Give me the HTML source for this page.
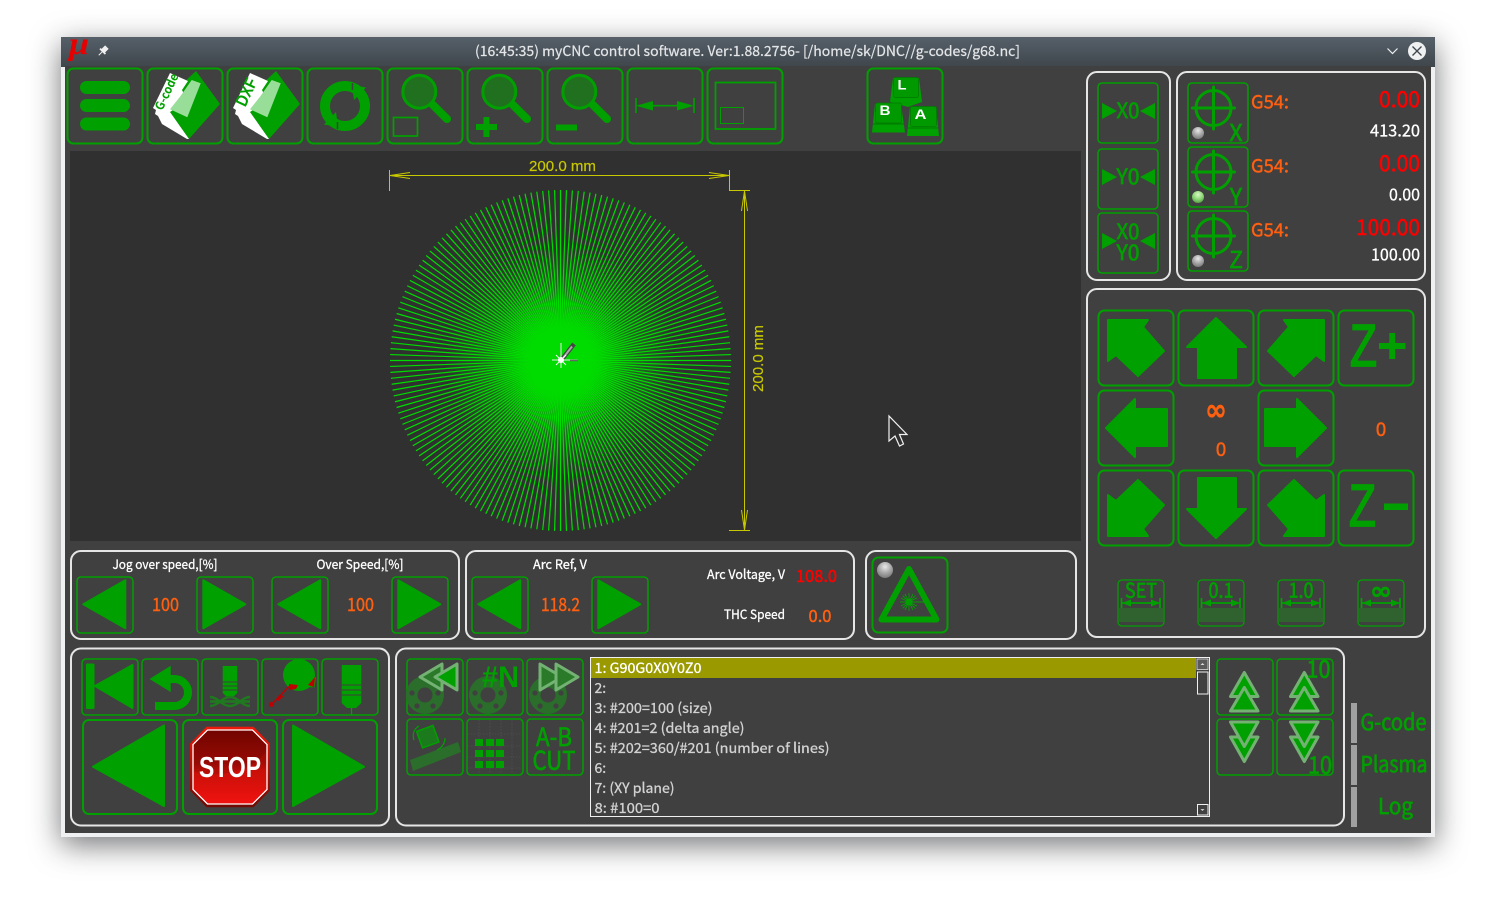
<!DOCTYPE html>
<html><head><meta charset="utf-8"><title>myCNC</title>
<style>
html,body{margin:0;padding:0;background:#fff;width:1496px;height:899px;overflow:hidden}
#win{position:absolute;left:61px;top:37px;width:1374px;height:800px;border-radius:3px 3px 0 0;box-shadow:0 8px 30px rgba(30,33,36,.62);background:#eff0f1}
svg{position:absolute;left:0;top:0}
text{font-family:"Noto Sans CJK SC","Liberation Sans",sans-serif}
.b{fill:none;stroke:#00a000;stroke-width:2}
.s{fill:none;stroke:#00a000;stroke-width:1.5}
.p{fill:none;stroke:#e6e6e6;stroke-width:2}
.g{fill:#00a000}
.gl{fill:#00a000;stroke:#00a000;stroke-width:2;stroke-linejoin:round}
.y{fill:#c8c800;font-family:"Liberation Sans",sans-serif;font-size:14.5px;stroke:#c8c800;stroke-width:.2}
.yl{stroke:#c8c800;stroke-width:1;fill:none}
.w{fill:#fff}
.o{fill:#ff6010}
.r{fill:#f00}
.l{fill:#d2d2d2;font-size:14px;stroke:#d2d2d2;stroke-width:.3}
text.g{stroke:#00a000;stroke-width:.65}
text.o{stroke:#ff6010;stroke-width:.4}
text.r{stroke:#f00;stroke-width:.45}
text.w{stroke:#fff;stroke-width:.3}
.ghost{fill:#2a7a2a;stroke:#74b274;stroke-width:3;stroke-linejoin:round}
.ghostf{fill:#00a000;stroke:#74b274;stroke-width:3;stroke-linejoin:round}
.kf{fill:#009a00;stroke:#007a00;stroke-width:.8}
.ks{fill:#00a000}
.kl{stroke:#006c00;stroke-width:.8;fill:none}
</style></head><body>
<div id="win"></div>
<svg width="1496" height="899" viewBox="0 0 1496 899" xmlns="http://www.w3.org/2000/svg">
<defs>
<linearGradient id="tb" x1="0" y1="0" x2="0" y2="1"><stop offset="0" stop-color="#566069"/><stop offset="1" stop-color="#3f464c"/></linearGradient>
<radialGradient id="led" cx=".5" cy=".3" r=".7"><stop offset="0" stop-color="#e8e8e8"/><stop offset=".55" stop-color="#a8a8a8"/><stop offset="1" stop-color="#7a7a7a"/></radialGradient>
<radialGradient id="ledg" cx=".5" cy=".3" r=".7"><stop offset="0" stop-color="#d8f8c8"/><stop offset=".55" stop-color="#90d878"/><stop offset="1" stop-color="#58a048"/></radialGradient>
<linearGradient id="st" x1="0" y1="0" x2="0" y2="1"><stop offset="0" stop-color="#7f0500"/><stop offset=".45" stop-color="#a80c06"/><stop offset=".55" stop-color="#c81008"/><stop offset="1" stop-color="#f01210"/></linearGradient>
<linearGradient id="so" x1="0" y1="0" x2="0" y2="1"><stop offset="0" stop-color="#f01808"/><stop offset="1" stop-color="#6e0a04"/></linearGradient>
<radialGradient id="glow" cx=".5" cy=".5" r=".5"><stop offset="0" stop-color="#00dc00" stop-opacity=".95"/><stop offset=".3" stop-color="#00dc00" stop-opacity=".85"/><stop offset=".65" stop-color="#00dc00" stop-opacity=".3"/><stop offset="1" stop-color="#00dc00" stop-opacity="0"/></radialGradient>

<line id="d0" x1="-170.5" x2="170.5" y1="0" y2="0" stroke="#00dc00" stroke-width="1.2"/>
<g id="d1"><use href="#d0"/><use href="#d0" transform="rotate(2)"/><use href="#d0" transform="rotate(4)"/><use href="#d0" transform="rotate(6)"/><use href="#d0" transform="rotate(8)"/></g>
<g id="d2"><use href="#d1"/><use href="#d1" transform="rotate(10)"/><use href="#d1" transform="rotate(20)"/></g>
<g id="d3"><use href="#d2"/><use href="#d2" transform="rotate(30)"/><use href="#d2" transform="rotate(60)"/></g>

<g id="tl"><polygon class="gl" points="7,28 49,4 49,52"/></g>
<g id="tr"><polygon class="gl" points="7,4 49,28 7,52"/></g>
<g id="mag"><circle cx="19.3" cy="24.7" r="16.5" fill="#207020" stroke="#00a000" stroke-width="3"/><line x1="33" y1="38" x2="47" y2="52" stroke="#00a000" stroke-width="8" stroke-linecap="round"/></g>
<g id="cross"><circle cx="0" cy="0" r="17.5" fill="none" stroke="#00a000" stroke-width="3"/><path d="M-21,0H21M0,-21V21" stroke="#00a000" stroke-width="3" stroke-linecap="round"/></g>
<g id="meas"><rect x="2" y="29" width="44" height="14" fill="#2f622f"/><path d="M4.5,19V29M43,19V29M5,24H43" stroke="#00a000" stroke-width="1.7" fill="none"/><polygon class="g" points="5,24 14,20.5 14,27.5"/><polygon class="g" points="43,24 34,20.5 34,27.5"/><rect class="s" style="stroke-width:1.2" x="1" y="1" width="46" height="46" rx="4"/></g>
<g id="gear"><circle r="19" fill="#2b6d2b"/><circle r="7.5" fill="#404040"/><circle cx="-13" cy="-2" r="2.6" fill="#404040"/><circle cx="13" cy="-2" r="2.6" fill="#404040"/><circle cx="-8" cy="11" r="2.6" fill="#404040"/><circle cx="8" cy="11" r="2.6" fill="#404040"/></g>
<polygon id="nw" class="gl" points="10,10 50,10 45,17 66,41 40,66 18,45 10,51"/>
<polygon id="nn" class="gl" points="38,8 68,37 58,37 58,68 20,68 20,37 9,37"/>
<polygon id="ww" class="gl" points="8,38 37,9 37,19 69,19 69,56 37,56 37,67"/>
</defs>

<!-- window chrome -->
<rect x="61" y="37" width="1374" height="30" fill="url(#tb)"/>
<rect x="65" y="66" width="1366" height="767" fill="#404040"/>
<text x="69" y="54" style="font-family:'Liberation Serif',serif;font-style:italic;font-weight:bold;font-size:32px" fill="#e60000" textLength="20" lengthAdjust="spacingAndGlyphs">μ</text>
<g transform="translate(103,51) rotate(45)" fill="#f0f0f0"><rect x="-2.5" y="-5.5" width="5" height="6"/><rect x="-3.8" y="-.5" width="7.6" height="1.8"/><rect x="-.5" y="1" width="1" height="5"/></g>
<text x="747.5" y="56" text-anchor="middle" font-size="14" fill="#e4e6e8" stroke="#e4e6e8" stroke-width=".2" textLength="545" lengthAdjust="spacingAndGlyphs">(16:45:35) myCNC control software. Ver:1.88.2756- [/home/sk/DNC//g-codes/g68.nc]</text>
<polyline points="1387.5,48.5 1392.5,53.5 1397.5,48.5" fill="none" stroke="#eff0f1" stroke-width="1.2"/>
<circle cx="1417" cy="51" r="9" fill="#eff0f1"/><path d="M1412.5,46.5L1421.5,55.5M1421.5,46.5L1412.5,55.5" stroke="#3f464c" stroke-width="1.3"/>

<!-- toolbar -->
<rect class="b" x="67.5" y="68.5" width="75" height="75" rx="6"/>
<rect class="b" x="147.5" y="68.5" width="75" height="75" rx="6"/>
<rect class="b" x="227.5" y="68.5" width="75" height="75" rx="6"/>
<rect class="b" x="307.5" y="68.5" width="75" height="75" rx="6"/>
<rect class="b" x="387.5" y="68.5" width="75" height="75" rx="6"/>
<rect class="b" x="467.5" y="68.5" width="75" height="75" rx="6"/>
<rect class="b" x="547.5" y="68.5" width="75" height="75" rx="6"/>
<rect class="b" x="627.5" y="68.5" width="75" height="75" rx="6"/>
<rect class="b" x="707.5" y="68.5" width="75" height="75" rx="6"/>
<rect class="b" x="867.5" y="68.5" width="75" height="75" rx="6"/>

<rect class="g" x="80" y="81" width="50" height="13" rx="6.5"/>
<rect class="g" x="80" y="99" width="50" height="13" rx="6.5"/>
<rect class="g" x="80" y="117.5" width="50" height="13" rx="6.5"/>

<!-- G-code icon -->
<g id="folder">
<polygon class="g" points="196,71 220,104 189,139 170,112 182,84"/>
<polygon points="170,73 188,81 182,90 184,94 178,100 176,108 170,112 189,139 187,139 162,124 158,116 155,114 156,110 153,108" fill="#fff"/>
<polygon points="191.7,80 200.7,83.3 187.3,117.3 170,109.3 180,96.7" fill="#98dd98"/>
</g>
<text transform="translate(170.5,93.5) rotate(-65)" text-anchor="middle" font-size="12" font-weight="bold" style="fill:#00a000;stroke:none" textLength="39" lengthAdjust="spacingAndGlyphs">G-code</text>
<use href="#folder" x="80"/>
<text transform="translate(251.5,94.5) rotate(-65)" text-anchor="middle" font-size="17" font-weight="bold" style="fill:#00a000;stroke:none;font-family:'Liberation Sans',sans-serif" textLength="29" lengthAdjust="spacingAndGlyphs">DXF</text>

<!-- refresh -->
<circle cx="345" cy="106" r="20" fill="none" stroke="#00a000" stroke-width="10"/>
<polygon class="g" points="352,85 366,87.5 354,100"/>
<polygon class="g" points="338,127 324,124.5 336,112"/>
<path d="M352.5,83V90M337.5,122V129" stroke="#404040" stroke-width="1.5"/>

<!-- magnifiers -->
<use href="#mag" x="400" y="67"/>
<rect x="393.5" y="117.5" width="24" height="18.5" fill="none" stroke="#00a000" stroke-width="1.7"/>
<use href="#mag" x="480" y="67"/>
<path d="M476,127H497M486.5,117V137" stroke="#00a000" stroke-width="6"/>
<use href="#mag" x="560" y="67"/>
<path d="M556,127.5H577" stroke="#00a000" stroke-width="6"/>

<!-- measure -->
<path d="M636,98V113M694,98V113M640,105.7H690" stroke="#00a000" stroke-width="1.6" fill="none"/>
<polygon class="g" points="636,105.7 653,101 653,110.5"/>
<polygon class="g" points="694,105.7 677,101 677,110.5"/>
<rect x="715.5" y="82.5" width="60" height="46.5" fill="none" stroke="#00a000" stroke-width="1.8"/>
<rect x="720.5" y="107.5" width="23" height="16" fill="none" stroke="#00a000" stroke-width="1"/>

<!-- keys -->
<g><polygon class="ks" points="890,102 893,78 919,78 922,102 908,107"/><rect class="kf" x="893.5" y="77.5" width="25" height="20" rx="2"/></g>
<g><polygon class="ks" points="872,132.5 875,104 901,104 905,132.5"/><rect class="kf" x="875.5" y="103" width="26" height="20" rx="2"/><path class="kl" d="M873,124H904"/></g>
<g><polygon class="ks" points="907,136 910,107 936,107 939,136"/><rect class="kf" x="910.5" y="106.5" width="26" height="20" rx="2"/><path class="kl" d="M908,128H938"/></g>
<text x="902" y="89.5" text-anchor="middle" font-size="14" font-weight="bold" style="fill:#fff;font-family:'Liberation Sans',sans-serif" textLength="9" lengthAdjust="spacingAndGlyphs">L</text>
<text x="885" y="115" text-anchor="middle" font-size="14" font-weight="bold" style="fill:#fff;font-family:'Liberation Sans',sans-serif" textLength="11" lengthAdjust="spacingAndGlyphs">B</text>
<text x="920.5" y="119" text-anchor="middle" font-size="14" font-weight="bold" style="fill:#fff;font-family:'Liberation Sans',sans-serif" textLength="12" lengthAdjust="spacingAndGlyphs">A</text>

<!-- canvas -->
<rect x="70" y="151" width="1011" height="390" fill="#303030"/>
<g transform="translate(560.5,360.5)"><use href="#d3"/><use href="#d3" transform="rotate(90)"/></g>
<circle cx="560.5" cy="360.5" r="115" fill="url(#glow)"/>
<path d="M561,343V368M552,360H578" stroke="#e8e8e8" stroke-width="1"/>
<path d="M563,358L574,344" stroke="#444" stroke-width="4.5"/>
<path d="M563.5,357.5L572,346.5" stroke="#aaa" stroke-width="2"/>
<circle cx="561" cy="360" r="3" fill="#fff"/>
<path d="M556,355L566,365M566,355L556,365" stroke="#fff" stroke-width="1"/>
<path d="M570,360.5H578" stroke="#666" stroke-width="1.5"/>
<!-- dimensions -->
<path class="yl" d="M389.5,170V191M389.5,175.5H729.5M729.5,170V190.5H750M744.5,190.5V530.5M729,530.5H750"/>
<path class="yl" d="M410,172.5L390,175.5L410,178.5M709,172.5L729,175.5L709,178.5M741.5,211L744.5,191L747.5,211M741.5,510L744.5,530L747.5,510"/>
<text class="y" x="562.5" y="171" text-anchor="middle" textLength="67" lengthAdjust="spacingAndGlyphs">200.0 mm</text>
<text class="y" transform="translate(763,358.5) rotate(-90)" text-anchor="middle" textLength="67" lengthAdjust="spacingAndGlyphs">200.0 mm</text>
<path d="M889,416V441L895,436L899.5,446L903.5,444L899.5,434.5H907Z" fill="#303030" stroke="#f2f2f2" stroke-width="1.2" stroke-linejoin="miter"/>

<!-- panels -->
<rect class="p" x="1087" y="72" width="83" height="208" rx="10"/>
<rect class="p" x="1177" y="72" width="248" height="208" rx="10"/>
<rect class="p" x="1087" y="289" width="338" height="348" rx="10"/>
<rect class="p" x="71" y="551" width="388" height="88" rx="10"/>
<rect class="p" x="466" y="551" width="388" height="88" rx="10"/>
<rect class="p" x="866" y="551" width="210" height="88" rx="10"/>
<rect class="p" x="71" y="648.5" width="318" height="177" rx="10"/>
<rect class="p" x="396" y="648.5" width="948" height="177" rx="10"/>

<!-- zero buttons -->
<rect class="s" x="1098" y="83" width="60" height="60" rx="4"/>
<rect class="s" x="1098" y="149" width="60" height="60" rx="4"/>
<rect class="s" x="1098" y="213" width="60" height="60" rx="4"/>
<polygon class="g" points="1102,103 1117,111 1102,119"/><polygon class="g" points="1155,103 1140,111 1155,119"/>
<text x="1128" y="118" text-anchor="middle" font-size="21" class="g" textLength="23" lengthAdjust="spacingAndGlyphs">X0</text>
<polygon class="g" points="1102,169 1117,177 1102,185"/><polygon class="g" points="1155,169 1140,177 1155,185"/>
<text x="1128" y="184" text-anchor="middle" font-size="21" class="g" textLength="23" lengthAdjust="spacingAndGlyphs">Y0</text>
<polygon class="g" points="1102,233 1117,241 1102,249"/><polygon class="g" points="1155,233 1140,241 1155,249"/>
<text x="1128" y="239" text-anchor="middle" font-size="21" class="g" textLength="23" lengthAdjust="spacingAndGlyphs">X0</text>
<text x="1128" y="260" text-anchor="middle" font-size="21" class="g" textLength="23" lengthAdjust="spacingAndGlyphs">Y0</text>

<!-- axis -->
<rect class="s" x="1188" y="83" width="60" height="60" rx="4"/>
<rect class="s" x="1188" y="147" width="60" height="60" rx="4"/>
<rect class="s" x="1188" y="211" width="60" height="60" rx="4"/>
<use href="#cross" x="1213.5" y="108"/><use href="#cross" x="1213.5" y="172"/><use href="#cross" x="1213.5" y="236"/>
<circle cx="1198" cy="133" r="6" fill="url(#led)"/><circle cx="1198" cy="197" r="6" fill="url(#ledg)"/><circle cx="1198" cy="261" r="6" fill="url(#led)"/>
<text x="1236" y="141" text-anchor="middle" font-size="23" class="g">X</text>
<text x="1236" y="205" text-anchor="middle" font-size="23" class="g">Y</text>
<text x="1236" y="268" text-anchor="middle" font-size="23" class="g">Z</text>
<text x="1251" y="108.5" font-size="18.5" class="o" textLength="38" lengthAdjust="spacingAndGlyphs">G54:</text>
<text x="1251" y="172.5" font-size="18.5" class="o" textLength="38" lengthAdjust="spacingAndGlyphs">G54:</text>
<text x="1251" y="236.5" font-size="18.5" class="o" textLength="38" lengthAdjust="spacingAndGlyphs">G54:</text>
<text x="1420" y="107" text-anchor="end" font-size="22" class="r" textLength="41" lengthAdjust="spacingAndGlyphs">0.00</text>
<text x="1420" y="171" text-anchor="end" font-size="22" class="r" textLength="41" lengthAdjust="spacingAndGlyphs">0.00</text>
<text x="1420" y="235" text-anchor="end" font-size="22" class="r" textLength="64" lengthAdjust="spacingAndGlyphs">100.00</text>
<text x="1420" y="136.5" text-anchor="end" font-size="17" class="w" textLength="50" lengthAdjust="spacingAndGlyphs">413.20</text>
<text x="1420" y="200.5" text-anchor="end" font-size="17" class="w" textLength="31" lengthAdjust="spacingAndGlyphs">0.00</text>
<text x="1420" y="260.5" text-anchor="end" font-size="17" class="w" textLength="49" lengthAdjust="spacingAndGlyphs">100.00</text>

<!-- jog -->
<rect class="b" x="1098.5" y="310.5" width="75" height="75" rx="6"/><rect class="b" x="1178.5" y="310.5" width="75" height="75" rx="6"/><rect class="b" x="1258.5" y="310.5" width="75" height="75" rx="6"/><rect class="b" x="1338.5" y="310.5" width="75" height="75" rx="6"/>
<rect class="b" x="1098.5" y="390.5" width="75" height="75" rx="6"/><rect class="b" x="1258.5" y="390.5" width="75" height="75" rx="6"/>
<rect class="b" x="1098.5" y="470.5" width="75" height="75" rx="6"/><rect class="b" x="1178.5" y="470.5" width="75" height="75" rx="6"/><rect class="b" x="1258.5" y="470.5" width="75" height="75" rx="6"/><rect class="b" x="1338.5" y="470.5" width="75" height="75" rx="6"/>
<use href="#nw" transform="translate(1098,310)"/>
<use href="#nn" transform="translate(1178,310)"/>
<use href="#nw" transform="translate(1334,310) scale(-1,1)"/>
<use href="#ww" transform="translate(1098,390)"/>
<use href="#ww" transform="translate(1334,390) scale(-1,1)"/>
<use href="#nw" transform="translate(1098,546) scale(1,-1)"/>
<use href="#nn" transform="translate(1178,546) scale(1,-1)"/>
<use href="#nw" transform="translate(1334,546) scale(-1,-1)"/>
<text x="1350" y="366" font-size="59" class="g" style="stroke-width:1.8;font-family:'Liberation Sans',sans-serif" textLength="27" lengthAdjust="spacingAndGlyphs">Z</text>
<path d="M1379,346H1405.5M1392.3,333V359" stroke="#00a000" stroke-width="6"/>
<text x="1349" y="526" font-size="59" class="g" style="stroke-width:1.8;font-family:'Liberation Sans',sans-serif" textLength="27" lengthAdjust="spacingAndGlyphs">Z</text>
<rect class="g" x="1384" y="503.5" width="24" height="6.5"/>
<text x="1216" y="420" text-anchor="middle" font-size="30" font-weight="bold" class="o" style="font-family:'DejaVu Sans',sans-serif" textLength="22" lengthAdjust="spacingAndGlyphs">∞</text>
<text x="1221" y="456" text-anchor="middle" font-size="19" class="o">0</text>
<text x="1381" y="436" text-anchor="middle" font-size="19" class="o">0</text>
<use href="#meas" x="1117" y="579"/><use href="#meas" x="1197" y="579"/><use href="#meas" x="1277" y="579"/><use href="#meas" x="1357" y="579"/>
<text x="1141" y="597.5" text-anchor="middle" font-size="20" class="g" textLength="32" lengthAdjust="spacingAndGlyphs">SET</text>
<text x="1221" y="597.5" text-anchor="middle" font-size="20" class="g" textLength="25" lengthAdjust="spacingAndGlyphs">0.1</text>
<text x="1301" y="597.5" text-anchor="middle" font-size="20" class="g" textLength="25" lengthAdjust="spacingAndGlyphs">1.0</text>
<text x="1381" y="599" text-anchor="middle" font-size="24" font-weight="bold" class="g" style="font-family:'DejaVu Sans',sans-serif" textLength="22" lengthAdjust="spacingAndGlyphs">∞</text>

<!-- speed panel -->
<rect class="s" x="77" y="577" width="56" height="56" rx="4"/><rect class="s" x="197" y="577" width="56" height="56" rx="4"/><rect class="s" x="272" y="577" width="56" height="56" rx="4"/><rect class="s" x="392" y="577" width="56" height="56" rx="4"/>
<rect class="s" x="472" y="577" width="56" height="56" rx="4"/><rect class="s" x="592" y="577" width="56" height="56" rx="4"/>
<use href="#tl" x="76.3" y="576.3"/><use href="#tr" x="196.3" y="576.3"/><use href="#tl" x="271.3" y="576.3"/><use href="#tr" x="391.3" y="576.3"/>
<use href="#tl" x="471.3" y="576.3"/><use href="#tr" x="591.3" y="576.3"/>
<text x="165" y="569" text-anchor="middle" font-size="13" class="w" textLength="105" lengthAdjust="spacingAndGlyphs">Jog over speed,[%]</text>
<text x="360" y="569" text-anchor="middle" font-size="13" class="w" textLength="87" lengthAdjust="spacingAndGlyphs">Over Speed,[%]</text>
<text x="165.5" y="611" text-anchor="middle" font-size="18" class="o" textLength="27" lengthAdjust="spacingAndGlyphs">100</text>
<text x="360.5" y="611" text-anchor="middle" font-size="18" class="o" textLength="27" lengthAdjust="spacingAndGlyphs">100</text>
<text x="560" y="569" text-anchor="middle" font-size="13" class="w" textLength="54" lengthAdjust="spacingAndGlyphs">Arc Ref, V</text>
<text x="560.5" y="611" text-anchor="middle" font-size="18" class="o" textLength="39" lengthAdjust="spacingAndGlyphs">118.2</text>
<text x="785" y="579" text-anchor="end" font-size="13" class="w" textLength="78" lengthAdjust="spacingAndGlyphs">Arc Voltage, V</text>
<text x="785" y="619" text-anchor="end" font-size="13" class="w" textLength="61" lengthAdjust="spacingAndGlyphs">THC Speed</text>
<text x="816.5" y="582" text-anchor="middle" font-size="17" class="r" textLength="41" lengthAdjust="spacingAndGlyphs">108.0</text>
<text x="820" y="622" text-anchor="middle" font-size="17" class="o" textLength="23" lengthAdjust="spacingAndGlyphs">0.0</text>

<!-- laser -->
<rect class="b" x="872.5" y="557.5" width="75" height="75" rx="6"/>
<polygon points="909,569 881.5,619.5 936.5,619.5" fill="none" stroke="#00a000" stroke-width="6" stroke-linejoin="round"/>
<circle cx="885" cy="570" r="8" fill="url(#led)"/>
<g stroke="#00a000" stroke-width=".9"><path d="M909,593V611M900,602H930M902.6,595.6L915.4,608.4M915.4,595.6L902.6,608.4M905,594L913,610M913,594L905,610M901,598L917,606M917,598L901,606"/></g>
<circle cx="909" cy="602" r="3.5" class="g"/>

<!-- bottom-left -->
<rect class="s" x="82" y="659" width="56" height="56" rx="4"/><rect class="s" x="142" y="659" width="56" height="56" rx="4"/><rect class="s" x="202" y="659" width="56" height="56" rx="4"/><rect class="s" x="262" y="659" width="56" height="56" rx="4"/><rect class="s" x="322" y="659" width="56" height="56" rx="4"/>
<rect class="b" x="83" y="720" width="94" height="94" rx="6"/><rect class="b" x="183" y="720" width="94" height="94" rx="6"/><rect class="b" x="283" y="720" width="94" height="94" rx="6"/>
<rect class="g" x="86" y="663.5" width="8.5" height="45.5" rx="1.5"/>
<polygon class="gl" points="95,686 132.5,665 132.5,708"/>
<polygon class="g" points="149.5,679 170.7,665.7 170.7,692"/>
<path d="M168,679H174.5A13.5,13.5 0 0 1 174.5,706H155" fill="none" stroke="#00a000" stroke-width="8"/>
<path d="M222.7,666H237.3V693L233,697H227L222.7,693Z" class="g"/>
<path d="M222.7,682H237.3M222.7,686H237.3M222.7,690H237.3" stroke="#404040" stroke-width="1"/>
<path d="M210,697C218,697 222,706 230,706S242,697 250,697M210,706C218,706 222,697 230,697S242,706 250,706M210,701.5H250" fill="none" stroke="#1f7a1f" stroke-width="2.4"/>
<circle cx="299" cy="675" r="16" class="g"/>
<path d="M289,686.5H314L315,677" fill="none" stroke="#00a000" stroke-width="1.5"/>
<path d="M272,704L289,686.5" stroke="#c00000" stroke-width="1.4"/>
<polygon points="289,684 298,685 296,689 289,690" fill="#c00000"/>
<polygon points="315,677 314,687 308,685" fill="#c00000"/>
<polygon points="279,695 284,696 277,702" fill="#c00000"/>
<circle cx="271.5" cy="704.5" r="2.5" fill="#c00000"/>
<path d="M341.7,665H361.3V703L356,708H347L341.7,703Z" class="g"/>
<path d="M341.7,685H361.3M341.7,690H361.3M341.7,695H361.3" stroke="#404040" stroke-width="1"/>
<path d="M351.5,708V715" stroke="#00a000" stroke-width="1.3"/>
<polygon class="gl" points="93,766.7 164,725.5 164,806"/>
<polygon class="gl" points="293,725.5 364,766.7 293,806"/>
<!-- stop -->
<polygon points="206.5,726.7 253.5,726.7 270,743.5 270,790.5 253.5,807.3 206.5,807.3 190,790.5 190,743.5" fill="url(#so)"/>
<polygon points="207.5,730 252.5,730 267,744.5 267,789.5 252.5,804 207.5,804 193,789.5 193,744.5" fill="url(#st)" stroke="#fff" stroke-width="1.3"/>
<path d="M194,772C220,778 250,772 266,752V744.5L252.5,731H207.5L194,744.5Z" fill="#000" opacity=".1"/>
<text x="230" y="777" text-anchor="middle" font-size="28.5" font-weight="bold" style="fill:#fff;font-family:'Liberation Sans',sans-serif" textLength="62" lengthAdjust="spacingAndGlyphs">STOP</text>

<!-- code panel buttons -->
<rect class="s" x="407" y="659" width="56" height="56" rx="4"/><rect class="s" x="467" y="659" width="56" height="56" rx="4"/><rect class="s" x="527" y="659" width="56" height="56" rx="4"/>
<rect class="s" x="407" y="719" width="56" height="56" rx="4"/><rect class="s" x="467" y="719" width="56" height="56" rx="4"/><rect class="s" x="527" y="719" width="56" height="56" rx="4"/>
<use href="#gear" x="425" y="695"/><use href="#gear" x="488" y="695"/><use href="#gear" x="548" y="695"/>
<polygon class="ghost" points="420,677 442,664 442,690"/>
<polygon class="ghostf" points="435,677 457,664 457,690"/>
<text x="500.5" y="687" text-anchor="middle" font-size="30" font-weight="bold" style="fill:#00a000;font-family:'Liberation Sans',sans-serif" textLength="37" lengthAdjust="spacingAndGlyphs">#N</text>
<polygon class="ghost" points="540,664 562,677 540,690"/>
<polygon class="ghost" points="556,664 578,677 556,690"/>
<polygon points="410,760 458,742 461,752 413,771" fill="#2b6d2b"/>
<g transform="rotate(-20 427.7 736.7)"><rect x="419" y="728" width="17.5" height="17.5" fill="#1b7a1b" stroke="#00a000" stroke-width="1.5"/></g>
<path d="M419,726C414,729 412,734 414,740M437,750C442,748 445,743 445,738" fill="none" stroke="#00a000" stroke-width="1.2"/>
<g stroke="#555" stroke-width=".6" stroke-dasharray="1.5 1.5"><path d="M468,734H522M468,746H522M468,757H522M468,768H522M479,720V774M490,720V774M501,720V774M512,720V774"/></g>
<g class="g"><rect x="475" y="739" width="8" height="7"/><rect x="486" y="739" width="8" height="7"/><rect x="496" y="739" width="8" height="7"/><rect x="475" y="750" width="8" height="7"/><rect x="486" y="750" width="8" height="7"/><rect x="496" y="750" width="8" height="7"/><rect x="475" y="761" width="8" height="7"/><rect x="486" y="761" width="8" height="7"/><rect x="496" y="761" width="8" height="7"/></g>
<text x="554" y="746" text-anchor="middle" font-size="25" class="g" textLength="36" lengthAdjust="spacingAndGlyphs">A-B</text>
<text x="554" y="769.5" text-anchor="middle" font-size="25" class="g" textLength="43" lengthAdjust="spacingAndGlyphs">CUT</text>

<!-- list -->
<rect x="590.5" y="657.5" width="619" height="159" fill="#404040" stroke="#f0f0f0" stroke-width="1"/>
<rect x="591" y="658" width="605" height="20" fill="#9a9a00"/>
<text class="w" font-size="14" x="594.5" y="673" textLength="107" lengthAdjust="spacingAndGlyphs">1: G90G0X0Y0Z0</text>
<text class="l" x="594.5" y="693">2:</text>
<text class="l" x="594.5" y="713" textLength="118" lengthAdjust="spacingAndGlyphs">3: #200=100 (size)</text>
<text class="l" x="594.5" y="733" textLength="150" lengthAdjust="spacingAndGlyphs">4: #201=2 (delta angle)</text>
<text class="l" x="594.5" y="753" textLength="235" lengthAdjust="spacingAndGlyphs">5: #202=360/#201 (number of lines)</text>
<text class="l" x="594.5" y="773">6:</text>
<text class="l" x="594.5" y="793" textLength="80" lengthAdjust="spacingAndGlyphs">7: (XY plane)</text>
<text class="l" x="594.5" y="813" textLength="65" lengthAdjust="spacingAndGlyphs">8: #100=0</text>
<rect x="1197" y="659" width="11" height="10.5" fill="#5a5a5a" stroke="#ddd" stroke-width=".8"/>
<polygon points="1200.5,665 1202.5,663 1204.5,665" fill="#ddd"/>
<rect x="1197.5" y="672" width="10.5" height="22" fill="#404040" stroke="#f0f0f0" stroke-width="1"/>
<rect x="1197.5" y="804.5" width="10.5" height="10.5" fill="#404040" stroke="#f0f0f0" stroke-width="1"/>
<polygon points="1200.5,809 1202.5,811 1204.5,809" fill="#ccc"/>

<!-- up/down -->
<rect class="s" x="1217" y="659" width="56" height="56" rx="4"/><rect class="s" x="1277" y="659" width="56" height="56" rx="4"/><rect class="s" x="1217" y="719" width="56" height="56" rx="4"/><rect class="s" x="1277" y="719" width="56" height="56" rx="4"/>
<g id="ud"><polygon class="ghostf" points="1244.3,672.5 1258,696.5 1230.5,696.5"/><polygon class="ghostf" points="1244.3,687.5 1258,711 1230.5,711"/><polygon class="ghostf" points="1244.3,761.5 1258,737 1230.5,737"/><polygon class="ghostf" points="1244.3,746.5 1258,722 1230.5,722"/></g>
<use href="#ud" x="60"/>
<text x="1318.5" y="677.5" text-anchor="middle" font-size="24" class="g" textLength="24" lengthAdjust="spacingAndGlyphs">10</text>
<text x="1320" y="773.5" text-anchor="middle" font-size="24" class="g" textLength="24" lengthAdjust="spacingAndGlyphs">10</text>

<!-- tabs -->
<rect x="1351" y="703" width="6" height="40" fill="#a0a0a0"/><rect x="1351" y="745" width="6" height="40" fill="#a0a0a0"/><rect x="1351" y="787" width="6" height="40" fill="#a0a0a0"/>
<text x="1393.5" y="730" text-anchor="middle" font-size="22" class="g" textLength="66" lengthAdjust="spacingAndGlyphs">G-code</text>
<text x="1394" y="772" text-anchor="middle" font-size="22" class="g" textLength="67" lengthAdjust="spacingAndGlyphs">Plasma</text>
<text x="1395.5" y="814" text-anchor="middle" font-size="22" class="g" textLength="35" lengthAdjust="spacingAndGlyphs">Log</text>
</svg>
</body></html>
